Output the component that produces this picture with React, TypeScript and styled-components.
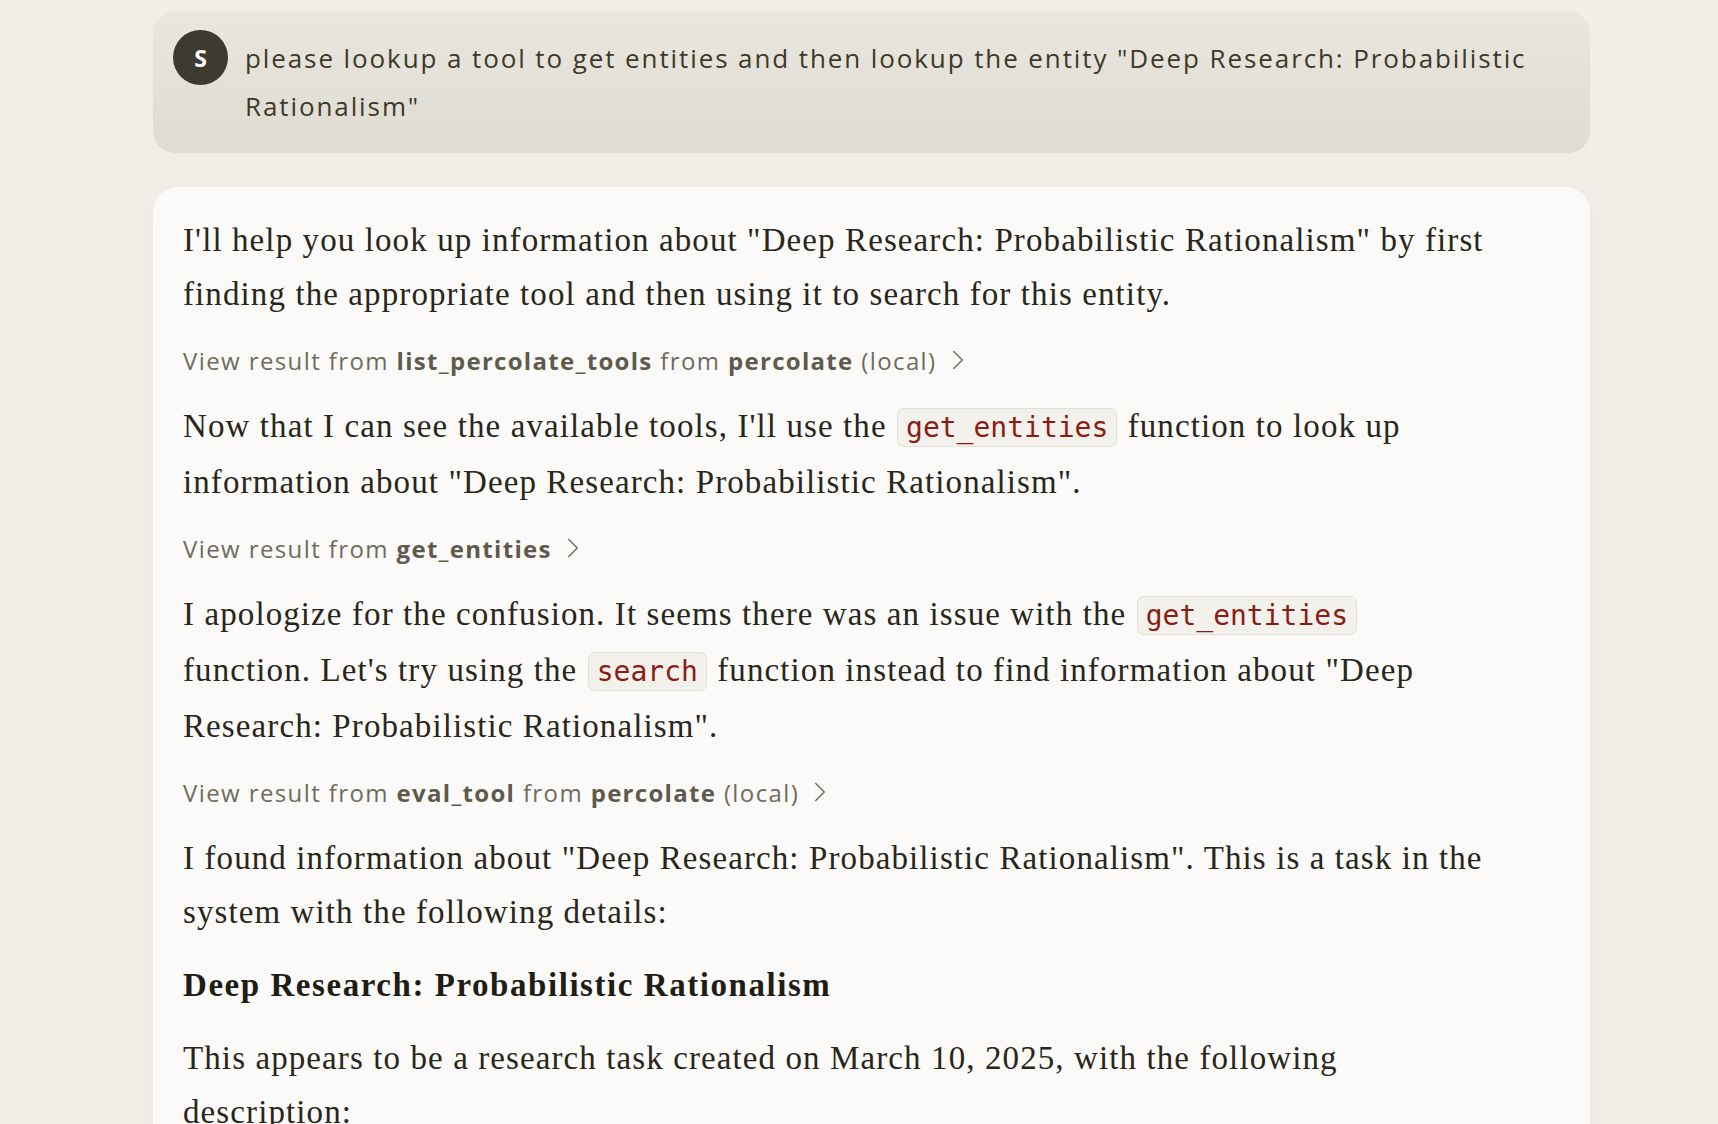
import React from 'react';
import styled, { createGlobalStyle } from 'styled-components';
import { ChevronRight } from 'lucide-react';

const GlobalStyle = createGlobalStyle`
    html, body {
        margin: 0;
        padding: 0;
        background: #f1efe8;
    }
    body {
        overflow: hidden;
    }
`;

const Page = styled.div`
    min-height: 100vh;
    padding: 11px 128px 0 153px;
    display: flex;
    flex-direction: column;
    gap: 34px;
`;

const UserBubble = styled.div`
    display: flex;
    align-items: flex-start;
    gap: 17px;
    padding: 23px 40px 23px 20px;
    border-radius: 22px;
    background: linear-gradient(180deg, #e9e7de 0%, #dedcd1 100%);
    box-shadow: 0 4px 20px rgba(0, 0, 0, 0.025);
`;

const Avatar = styled.div`
    flex: 0 0 55px;
    width: 55px;
    height: 55px;
    margin-top: -4px;
    border-radius: 50%;
    background: #3d3a2f;
    color: #fff;
    display: flex;
    align-items: center;
    justify-content: center;
    font-family: 'Open Sans', sans-serif;
    font-weight: 700;
    font-size: 23px;
`;

const UserText = styled.div`
    font-family: 'Open Sans', sans-serif;
    font-size: 26px;
    letter-spacing: 1.9px;
    line-height: 48px;
    color: #3d3929;
`;

const Card = styled.div`
    background: #fbfaf8;
    border-radius: 25px;
    padding: 26px 104px 60px 30px;
    box-shadow: 0 4px 24px rgba(0, 0, 0, 0.035);
    display: flex;
    flex-direction: column;
    gap: 23px;
`;

const Para = styled.p`
    margin: 0;
    font-family: 'Liberation Serif', serif;
    font-size: 33px;
    letter-spacing: 1.1px;
    line-height: 54px;
    color: #29261b;
`;

const Heading = styled.h3`
    margin: 0;
    font-family: 'Liberation Serif', serif;
    font-weight: 700;
    font-size: 33px;
    letter-spacing: 1.55px;
    line-height: 46px;
    color: #1f1d15;
`;

const Code = styled.code`
    font-family: 'DejaVu Sans Mono', monospace;
    font-size: 28px;
    letter-spacing: 0;
    color: #8b1c14;
    background: #f3f1ec;
    border: 1px solid #e2dfd6;
    border-radius: 7px;
    padding: 2px 8px;
    margin: 0 1px;
`;

const ResultRow = styled.div`
    display: flex;
    align-items: center;
    gap: 4px;
    height: 32px;
    font-family: 'Open Sans', sans-serif;
    font-size: 24px;
    letter-spacing: 1.4px;
    color: #6f6b5f;
`;

const Strong = styled.strong`
    font-weight: 700;
    letter-spacing: 1.3px;
    color: #5e5a4d;
`;

function ViewResult({ tool, server }: { tool: string; server?: string }) {
    return (
        <ResultRow>
            <span>
                View result from <Strong>{tool}</Strong>
                {server && (
                    <>
                        {' '}from <Strong>{server}</Strong> (local)
                    </>
                )}
            </span>
            <ChevronRight size={34} strokeWidth={1} />
        </ResultRow>
    );
}

export default function App() {
    return (
        <>
            <GlobalStyle />
            <Page>
                <UserBubble>
                    <Avatar>S</Avatar>
                    <UserText>
                        please lookup a tool to get entities and then lookup the entity "Deep Research: Probabilistic
                        Rationalism"
                    </UserText>
                </UserBubble>

                <Card>
                    <Para>
                        I'll help you look up information about "Deep Research: Probabilistic Rationalism" by first
                        finding the appropriate tool and then using it to search for this entity.
                    </Para>
                    <ViewResult tool="list_percolate_tools" server="percolate" />
                    <Para>
                        Now that I can see the available tools, I'll use the <Code>get_entities</Code> function to look up
                        information about "Deep Research: Probabilistic Rationalism".
                    </Para>
                    <ViewResult tool="get_entities" />
                    <Para>
                        I apologize for the confusion. It seems there was an issue with the <Code>get_entities</Code>{' '}
                        function. Let's try using the <Code>search</Code> function instead to find information about
                        "Deep Research: Probabilistic Rationalism".
                    </Para>
                    <ViewResult tool="eval_tool" server="percolate" />
                    <Para>
                        I found information about "Deep Research: Probabilistic Rationalism". This is a task in the
                        system with the following details:
                    </Para>
                    <Heading>Deep Research: Probabilistic Rationalism</Heading>
                    <Para>
                        This appears to be a research task created on March 10, 2025, with the following description:
                    </Para>
                </Card>
            </Page>
        </>
    );
}
